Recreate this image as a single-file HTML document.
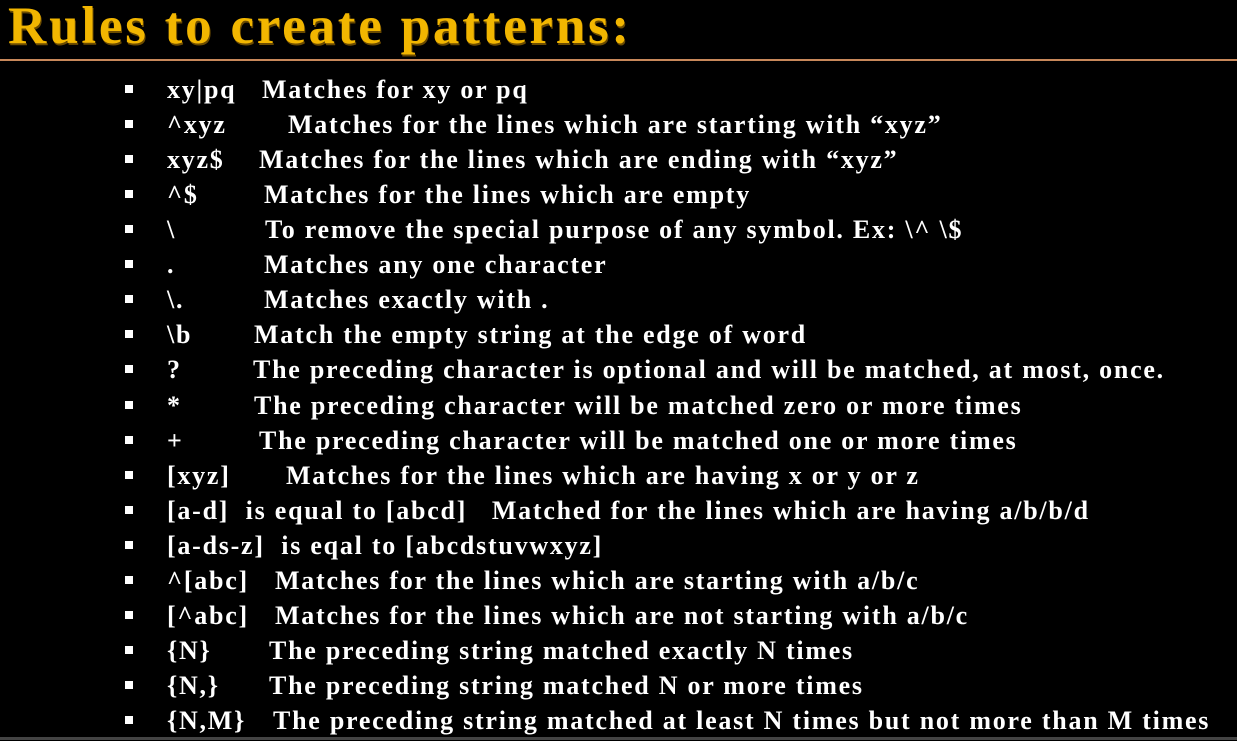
<!DOCTYPE html>
<html><head><meta charset="utf-8"><style>
html,body{margin:0;padding:0;background:#000;width:1237px;height:741px;overflow:hidden;position:relative;font-family:"Liberation Serif",serif;}
.t{position:absolute;left:8px;top:0px;font-size:53px;line-height:53px;font-weight:bold;color:#f2b600;text-shadow:1px 2px 0 #6a4a00;white-space:nowrap;letter-spacing:2.8px}
.hr{position:absolute;left:0;top:59px;width:1237px;height:2px;background:#c8885a}
.bt{position:absolute;left:0;top:737px;width:1237px;height:3px;background:#444}
.r{position:absolute;color:#fff;font-weight:bold;font-size:26px;letter-spacing:1.75px;white-space:nowrap;line-height:30px}
.b{position:absolute;left:125px;width:8px;height:8px;background:#fff}
</style></head><body>
<div class="t">Rules to create patterns:</div>
<div class="hr"></div>
<div class="bt"></div>
<div id="c"></div>
<script>
var rows=[["xy|pq",262,"Matches for xy or pq"],["^xyz",288,"Matches for the lines which are starting with  “xyz”"],["xyz$",259,"Matches for the lines which are ending with “xyz”"],["^$",264,"Matches for the lines which are empty"],["\\",265,"To remove the special purpose of  any symbol. Ex: \\^  \\$"],[".",264,"Matches any one character"],["\\.",264,"Matches exactly with ."],["\\b",254,"Match the empty string at the edge of  word"],["?",253,"The preceding character is optional and will be matched, at most, once."],["*",254,"The preceding character will be matched zero or more times"],["+",259,"The preceding character will be matched one or more times"],["[xyz]",286,"Matches for the lines which are having x or y or z"],["[a-d]  is equal to [abcd]   Matched for the lines which are having a/b/b/d",0,""],["[a-ds-z]  is eqal to [abcdstuvwxyz]",0,""],["^[abc]",275,"Matches for the lines which are starting with a/b/c"],["[^abc]",275,"Matches for the lines which are not starting with a/b/c"],["{N}",269,"The preceding string matched exactly N times"],["{N,}",269,"The preceding string matched N or more times"],["{N,M}",273,"The preceding string matched at least N times but not more than M times"]];
var h="";
rows.forEach(function(r,i){var y=90+i*35.06;
h+='<div class="b" style="top:'+(y-5)+'px"></div>';
h+='<div class="r" style="left:167px;top:'+(y-15)+'px">'+r[0].replace(/&/g,"&amp;").replace(/</g,"&lt;").replace(/ /g,"&nbsp;")+'</div>';
if(r[1])h+='<div class="r" style="left:'+r[1]+'px;top:'+(y-15)+'px">'+r[2]+'</div>';});
document.getElementById("c").innerHTML=h;
</script>
</body></html>
